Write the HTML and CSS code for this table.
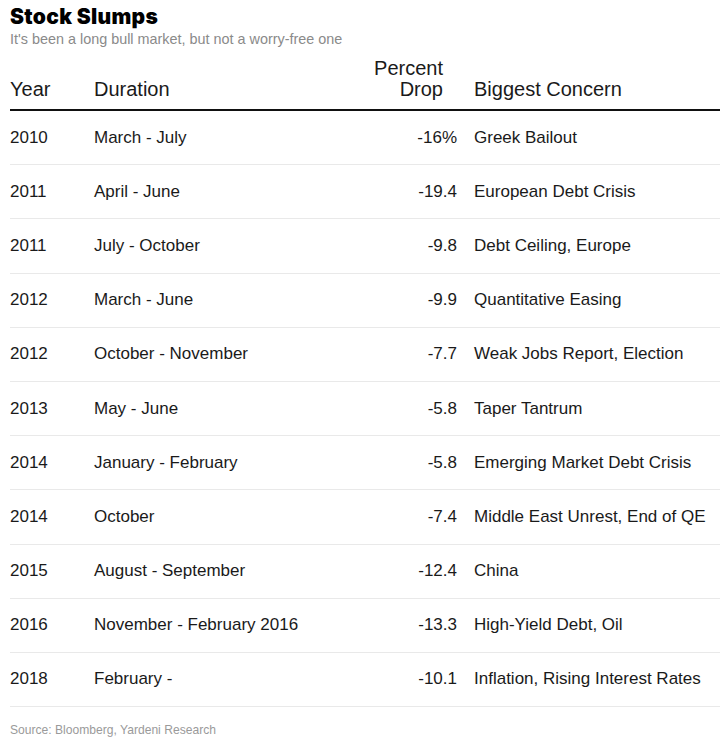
FILE: index.html
```html
<!DOCTYPE html>
<html>
<head>
<meta charset="utf-8">
<link rel="stylesheet" href="styles.css">
</head>
<body>
<div class="page">
  <h1 class="title">Stock Slumps</h1>
  <p class="subtitle">It's been a long bull market, but not a worry-free one</p>
  <table class="slumps">
    <colgroup>
      <col class="w-year">
      <col class="w-dur">
      <col class="w-drop">
      <col class="w-con">
    </colgroup>
    <thead>
      <tr>
        <th class="c-year">Year</th>
        <th class="c-dur">Duration</th>
        <th class="c-drop">Percent<br>Drop</th>
        <th class="c-con">Biggest Concern</th>
      </tr>
    </thead>
    <tbody>
      <tr><td class="c-year">2010</td><td class="c-dur">March - July</td><td class="c-drop">-16%</td><td class="c-con">Greek Bailout</td></tr>
      <tr><td class="c-year">2011</td><td class="c-dur">April - June</td><td class="c-drop">-19.4</td><td class="c-con">European Debt Crisis</td></tr>
      <tr><td class="c-year">2011</td><td class="c-dur">July - October</td><td class="c-drop">-9.8</td><td class="c-con">Debt Ceiling, Europe</td></tr>
      <tr><td class="c-year">2012</td><td class="c-dur">March - June</td><td class="c-drop">-9.9</td><td class="c-con">Quantitative Easing</td></tr>
      <tr><td class="c-year">2012</td><td class="c-dur">October - November</td><td class="c-drop">-7.7</td><td class="c-con">Weak Jobs Report, Election</td></tr>
      <tr><td class="c-year">2013</td><td class="c-dur">May - June</td><td class="c-drop">-5.8</td><td class="c-con">Taper Tantrum</td></tr>
      <tr><td class="c-year">2014</td><td class="c-dur">January - February</td><td class="c-drop">-5.8</td><td class="c-con">Emerging Market Debt Crisis</td></tr>
      <tr><td class="c-year">2014</td><td class="c-dur">October</td><td class="c-drop">-7.4</td><td class="c-con">Middle East Unrest, End of QE</td></tr>
      <tr><td class="c-year">2015</td><td class="c-dur">August - September</td><td class="c-drop">-12.4</td><td class="c-con">China</td></tr>
      <tr><td class="c-year">2016</td><td class="c-dur">November - February 2016</td><td class="c-drop">-13.3</td><td class="c-con">High-Yield Debt, Oil</td></tr>
      <tr><td class="c-year">2018</td><td class="c-dur">February -</td><td class="c-drop">-10.1</td><td class="c-con">Inflation, Rising Interest Rates</td></tr>
    </tbody>
  </table>
  <p class="source">Source: Bloomberg, Yardeni Research</p>
</div>
</body>
</html>
```

FILE: styles.css
```css
html, body {
  margin: 0;
  padding: 0;
  background: #fff;
}
.page {
  padding: 5px 0 0 10px;
  font-family: "Liberation Sans", Arial, sans-serif;
  color: #1a1a1a;
}
.title {
  margin: 0;
  font-family: Inter, "Liberation Sans", sans-serif;
  font-weight: 900;
  font-size: 21px;
  line-height: 24px;
  letter-spacing: 0.3px;
  color: #000;
}
.subtitle {
  margin: 1px 0 0;
  font-size: 14.4px;
  line-height: 18px;
  color: #8a8a8a;
}
.slumps {
  width: 710px;
  table-layout: fixed;
  border-collapse: collapse;
  margin-top: 10px;
  font-size: 17px;
}
.w-year { width: 84px; }
.w-dur { width: 262px; }
.w-drop { width: 101px; }
.w-con { width: 263px; }
.slumps th {
  font-weight: normal;
  font-size: 20px;
  line-height: 21px;
  text-align: left;
  vertical-align: bottom;
  padding: 0 0 9px;
  border-bottom: 2px solid #111;
}
.slumps td {
  height: 53.2px;
  padding: 0;
  border-bottom: 1px solid #e9e9e9;
  vertical-align: middle;
  white-space: nowrap;
}
.slumps .c-drop {
  text-align: right;
}
.slumps th.c-drop {
  padding-right: 14px;
}
.slumps .c-con {
  padding-left: 17px;
}
.source {
  margin: 16px 0 0;
  font-size: 12.1px;
  color: #9a9a9a;
}
```
